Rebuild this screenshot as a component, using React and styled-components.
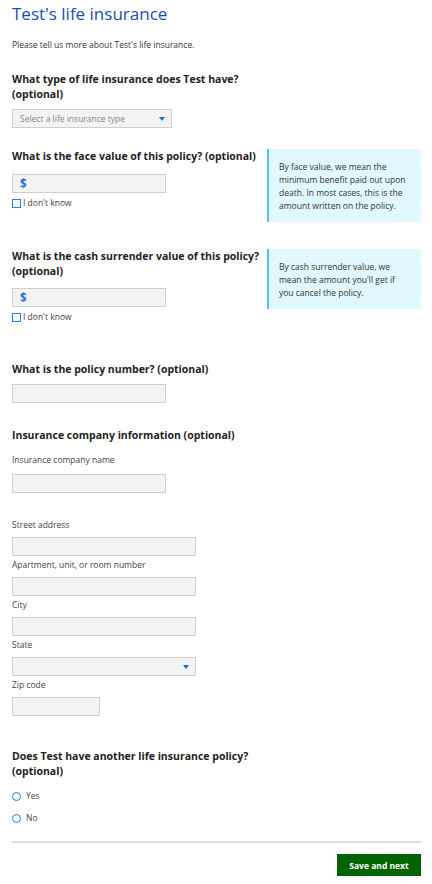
import React from 'react';
import styled, { createGlobalStyle } from 'styled-components';

const GlobalStyle = createGlobalStyle`
  body {
    margin: 0;
    background: #fff;
    font-family: "Open Sans", "Noto Sans", sans-serif;
    color: #222;
  }
`;

function App() {
  return (
    <Page>
      <GlobalStyle />
      <Title>Test's life insurance</Title>
      <Intro>Please tell us more about Test's life insurance.</Intro>

      <Question $top={21}>What type of life insurance does Test have? (optional)</Question>
      <SelectBox $width={160} $top={7}>
        <Placeholder>Select a life insurance type</Placeholder>
        <Caret />
      </SelectBox>

      <SplitRow $top={21}>
        <LeftCol>
          <Question $wide>What is the face value of this policy? (optional)</Question>
          <MoneyInput $top={10}>$</MoneyInput>
          <CheckRow>
            <CheckBox />
            I don't know
          </CheckRow>
        </LeftCol>
        <InfoBox>
          By face value, we mean the minimum benefit paid out upon death. In
          most cases, this is the amount written on the policy.
        </InfoBox>
      </SplitRow>

      <SplitRow $top={27}>
        <LeftCol>
          <Question $wide>What is the cash surrender value of this policy? (optional)</Question>
          <MoneyInput $top={9}>$</MoneyInput>
          <CheckRow>
            <CheckBox />
            I don't know
          </CheckRow>
        </LeftCol>
        <InfoBox>
          By cash surrender value, we mean the amount you'll get if you cancel
          the policy.
        </InfoBox>
      </SplitRow>

      <Question $top={39}>What is the policy number? (optional)</Question>
      <TextInput $width={154} $top={7} />

      <Question $top={25}>Insurance company information (optional)</Question>
      <FieldLabel $top={11}>Insurance company name</FieldLabel>
      <TextInput $width={154} $top={8} />

      <FieldLabel $top={26}>Street address</FieldLabel>
      <TextInput $width={184} $top={6} />
      <FieldLabel $top={3}>Apartment, unit, or room number</FieldLabel>
      <TextInput $width={184} $top={6} />
      <FieldLabel $top={3}>City</FieldLabel>
      <TextInput $width={184} $top={6} />
      <FieldLabel $top={3}>State</FieldLabel>
      <SelectBox $width={184} $top={6}>
        <span />
        <Caret />
      </SelectBox>
      <FieldLabel $top={3}>Zip code</FieldLabel>
      <TextInput $width={88} $top={6} />

      <Question $top={33}>Does Test have another life insurance policy? (optional)</Question>
      <RadioList>
        <RadioRow>
          <Radio />
          Yes
        </RadioRow>
        <RadioRow>
          <Radio />
          No
        </RadioRow>
      </RadioList>

      <Divider />
      <Footer>
        <SaveButton>Save and next</SaveButton>
      </Footer>
    </Page>
  );
}

export default App;

const Page = styled.div`
  width: 409px;
  padding: 2px 11px 8px 12px;
  display: flex;
  flex-direction: column;
  align-items: flex-start;
`;

const Title = styled.h1`
  margin: 0;
  font-size: 17px;
  line-height: 24px;
  font-weight: 400;
  color: #1a4cb8;
`;

const Intro = styled.p`
  margin: 12px 0 0;
  font-size: 8.5px;
  line-height: 13px;
  color: #333;
`;

const Question = styled.h2`
  margin: ${({ $top }) => $top || 0}px 0 0;
  max-width: ${({ $wide }) => ($wide ? 252 : 246)}px;
  font-size: 10.5px;
  line-height: 15px;
  font-weight: 700;
  color: #222;
`;

const FieldLabel = styled.label`
  display: block;
  margin-top: ${({ $top }) => $top || 0}px;
  font-size: 8.5px;
  line-height: 12px;
  color: #444;
`;

const TextInput = styled.div`
  box-sizing: border-box;
  width: ${({ $width }) => $width}px;
  height: 19px;
  margin-top: ${({ $top }) => $top || 0}px;
  background: #f3f3f3;
  border: 1px solid #cfcfcf;
`;

const SelectBox = styled(TextInput)`
  display: flex;
  align-items: center;
  justify-content: space-between;
  padding: 0 6px 0 7px;
`;

const Placeholder = styled.span`
  font-size: 8.5px;
  color: #888;
`;

const Caret = styled.span`
  width: 0;
  height: 0;
  border-left: 3px solid transparent;
  border-right: 3px solid transparent;
  border-top: 4px solid #1e6bd6;
`;

const MoneyInput = styled(TextInput)`
  width: 154px;
  display: flex;
  align-items: center;
  padding-left: 7px;
  font-size: 11.5px;
  font-weight: 700;
  color: #2a72d8;
`;

const SplitRow = styled.div`
  width: 100%;
  margin-top: ${({ $top }) => $top}px;
  display: flex;
  justify-content: space-between;
  align-items: flex-start;
`;

const LeftCol = styled.div`
  display: flex;
  flex-direction: column;
`;

const InfoBox = styled.div`
  box-sizing: border-box;
  flex-shrink: 0;
  width: 154px;
  padding: 11px 10px 10px 10px;
  background: #e1f8fe;
  border-left: 2px solid #4fc2e6;
  font-size: 8.5px;
  line-height: 13px;
  color: #333;
`;

const CheckRow = styled.div`
  display: flex;
  align-items: center;
  gap: 2px;
  margin-top: 4px;
  font-size: 8.5px;
  line-height: 12px;
  color: #444;
`;

const CheckBox = styled.span`
  box-sizing: border-box;
  width: 9px;
  height: 9px;
  border: 1.5px solid #2a7be0;
`;

const RadioList = styled.div`
  margin-top: 11px;
  display: flex;
  flex-direction: column;
  gap: 10px;
`;

const RadioRow = styled.div`
  display: flex;
  align-items: center;
  gap: 5px;
  font-size: 8.5px;
  line-height: 12px;
  color: #444;
`;

const Radio = styled.span`
  box-sizing: border-box;
  width: 9px;
  height: 9px;
  border-radius: 50%;
  border: 1.5px solid #2a7be0;
`;

const Divider = styled.hr`
  width: 100%;
  margin: 17px 0 0;
  border: none;
  border-top: 2px solid #dcdcdc;
`;

const Footer = styled.div`
  width: 100%;
  margin-top: 11px;
  display: flex;
  justify-content: flex-end;
`;

const SaveButton = styled.button`
  width: 84px;
  height: 22px;
  padding: 0;
  background: #006400;
  border: 1px solid #0a5a0a;
  color: #fff;
  font-family: inherit;
  font-size: 8.5px;
  font-weight: 700;
`;
